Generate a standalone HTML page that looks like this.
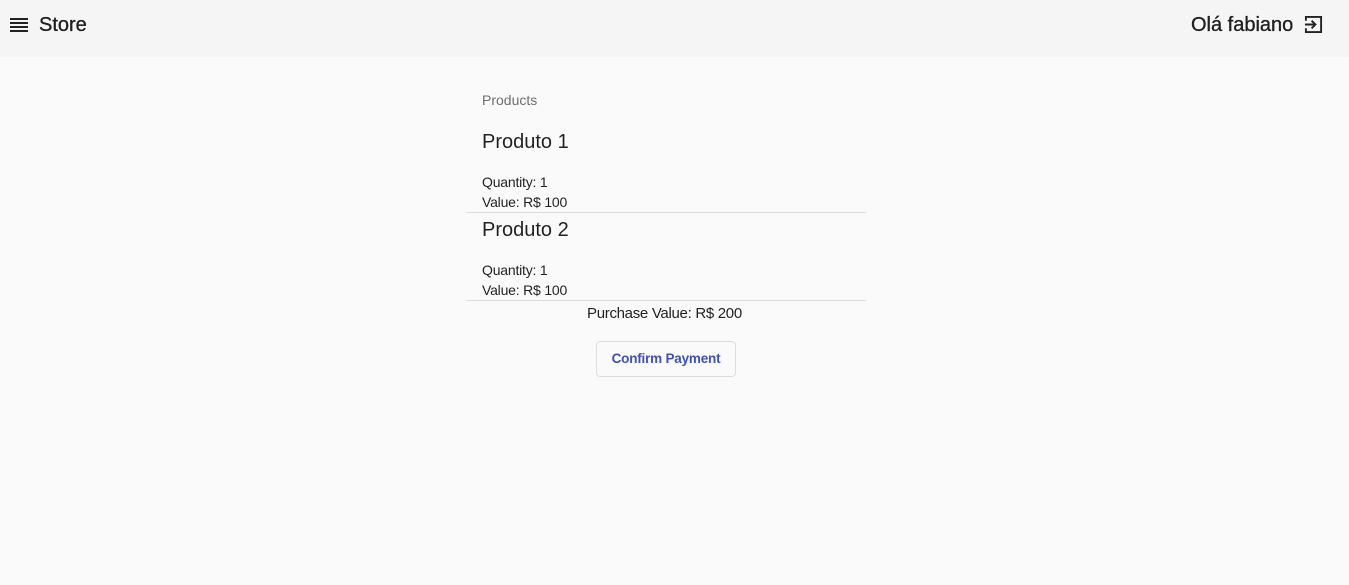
<!DOCTYPE html>
<html><head><meta charset="utf-8"><style>
body{margin:0;width:1349px;height:585px;background:#fafafa;font-family:"Liberation Sans",sans-serif;color:rgba(0,0,0,.87);position:relative;overflow:hidden}
.bar{position:absolute;left:0;top:0;width:1349px;height:57px;background:#f5f5f5}
.t{position:absolute;white-space:nowrap}
.hr{position:absolute;left:466px;width:400px;height:1px;background:#dcdcdc}
.btn{position:absolute;left:596px;top:341px;width:138px;height:34px;border:1px solid #ddd;border-radius:4px;color:#3f51b5;font-size:13.5px;font-weight:bold;text-align:center;line-height:34px;letter-spacing:-0.2px}
</style></head><body>
<div class="bar">
<svg style="position:absolute;left:10px;top:16px" width="19" height="18" viewBox="0 0 19 18"><rect x="0" y="2" width="18" height="2" fill="#222"/><rect x="0" y="6" width="18" height="2" fill="#222"/><rect x="0" y="10" width="18" height="2" fill="#222"/><rect x="0" y="14" width="18" height="2" fill="#222"/></svg>
<div class="t" style="left:39px;top:14px;font-size:20px;-webkit-text-stroke:0.3px #111">Store</div>
<div class="t" style="left:1191px;top:14px;font-size:20px;-webkit-text-stroke:0.3px #111">Olá fabiano</div>
<svg style="position:absolute;left:1304px;top:15px" width="19" height="19" viewBox="0 0 20 20" fill="none" stroke="#222" stroke-width="2"><path d="M2 6V2h16v16H2v-4"/><path d="M1 10h11M8 6l4 4-4 4"/></svg>
</div>
<div class="t" style="left:482px;top:92px;font-size:14px;color:#6f6f6f">Products</div>
<div class="t" style="left:482px;top:131px;font-size:20px">Produto 1</div>
<div class="t" style="left:482px;top:174px;font-size:14px;letter-spacing:-0.2px">Quantity: 1</div>
<div class="t" style="left:482px;top:194px;font-size:14px;letter-spacing:-0.2px">Value: R$ 100</div>
<div class="hr" style="top:212px"></div>
<div class="t" style="left:482px;top:219px;font-size:20px">Produto 2</div>
<div class="t" style="left:482px;top:262px;font-size:14px;letter-spacing:-0.2px">Quantity: 1</div>
<div class="t" style="left:482px;top:282px;font-size:14px;letter-spacing:-0.2px">Value: R$ 100</div>
<div class="hr" style="top:300px"></div>
<div class="t" style="left:587px;top:305px;font-size:15px;letter-spacing:-0.3px">Purchase Value: R$ 200</div>
<div class="btn">Confirm Payment</div>
</body></html>
